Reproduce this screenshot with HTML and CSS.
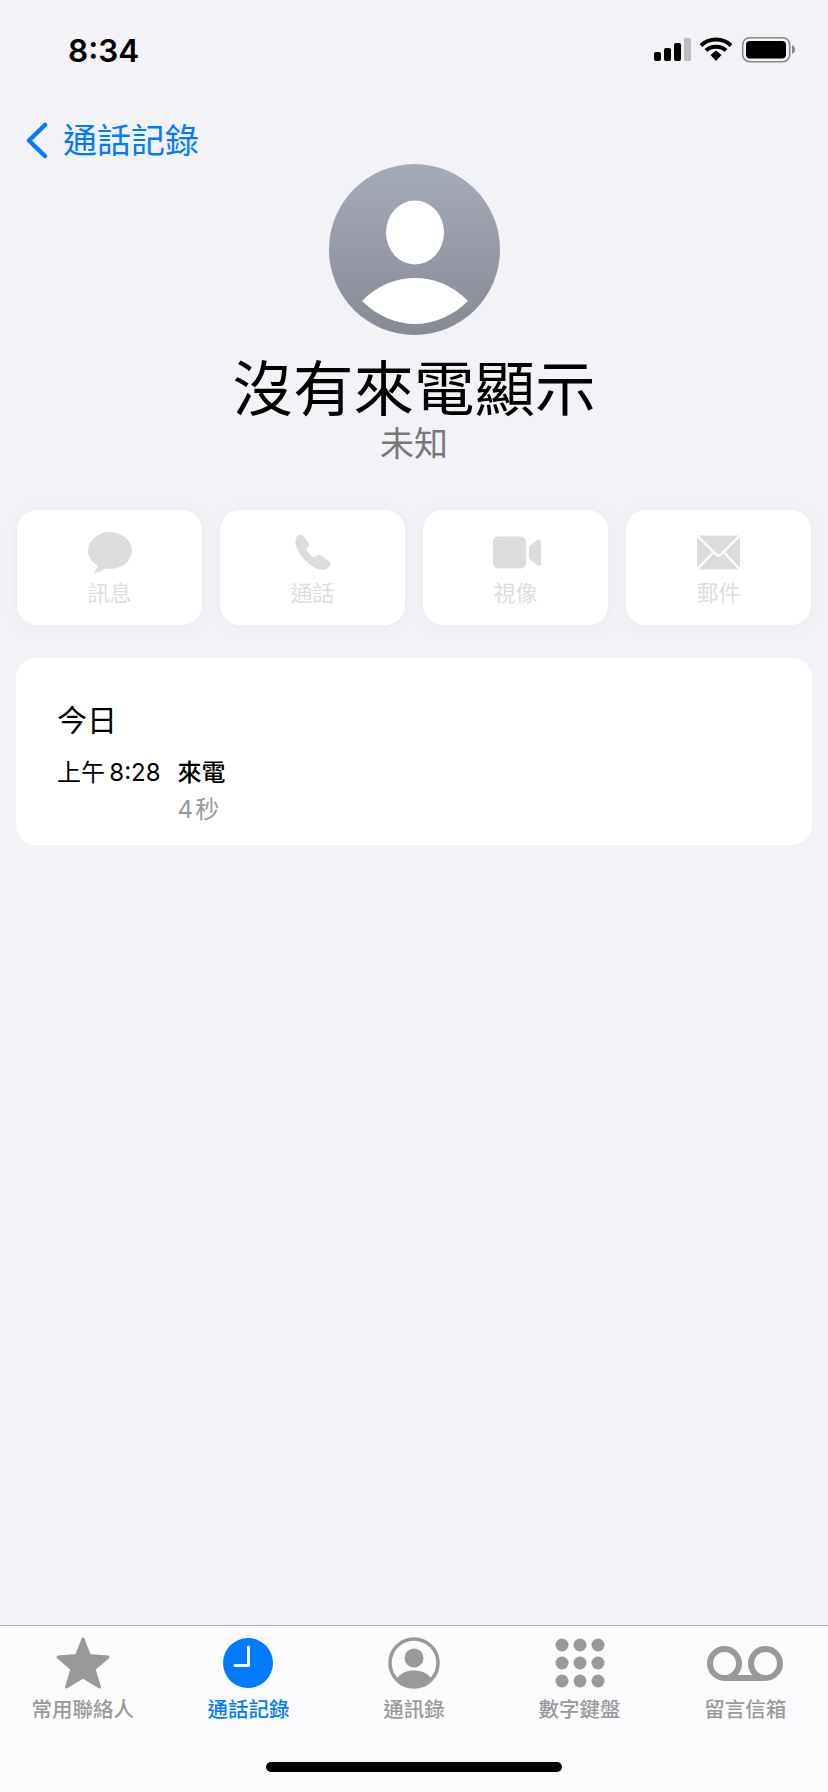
FILE: index.html
```html
<!DOCTYPE html>
<html lang="zh-Hant">
<head>
    <meta charset="UTF-8">
    <meta name="viewport" content="width=device-width, initial-scale=1.0">
    <title>通話記錄</title>
    <link rel="stylesheet" href="styles.css">
</head>
<body>
    <div class="status-bar">
        <span class="status-time">8:34</span>
        <svg class="status-icons" width="141" height="26" viewBox="0 0 141 26">
            <rect x="0" y="15" width="7" height="9" rx="2" fill="#000"/>
            <rect x="10" y="11" width="7" height="13" rx="2" fill="#000"/>
            <rect x="20" y="6" width="7" height="18" rx="2" fill="#000"/>
            <rect x="30" y="1" width="7" height="23" rx="1.5" fill="#bdbdc0"/>
            <path d="M47 8.500 C55 0.500 69 0.500 77 8.500" fill="none" stroke="#000" stroke-width="4"/>
            <path d="M52 13.500 C57 8.500 67 8.500 72 13.500" fill="none" stroke="#000" stroke-width="4"/>
            <path d="M56.500 18 L62 13.500 L67.500 18 L62 24 Z" fill="#000"/>
            <rect x="88.700" y="0.700" width="47" height="24" rx="7" fill="none" stroke="#8a8a8c" stroke-width="1.600"/>
            <rect x="92" y="4" width="40" height="17.500" rx="4" fill="#000"/>
            <path d="M138 8 C140 8.500 141 10.500 141 12.500 C141 14.500 140 16.500 138 17 Z" fill="#8a8a8c"/>
        </svg>
    </div>

    <a class="back-link" href="#">
        <svg width="23" height="37" viewBox="0 0 23 37">
            <path d="M20 3 L4 18.500 L20 34" fill="none" stroke="#007aff" stroke-width="4.500" stroke-linecap="round" stroke-linejoin="round"/>
        </svg>
        <span>通話記錄</span>
    </a>

    <div class="profile">
        <svg class="avatar" width="171" height="171" viewBox="0 0 171 171">
            <defs>
                <linearGradient id="avatarFill" x1="0" y1="0" x2="0" y2="1">
                    <stop offset="0" stop-color="#a6abb8"/>
                    <stop offset="1" stop-color="#858a95"/>
                </linearGradient>
            </defs>
            <circle cx="85.500" cy="85.500" r="85.500" fill="url(#avatarFill)"/>
            <ellipse cx="86" cy="68.500" rx="29" ry="32" fill="#fff"/>
            <path d="M33 137 C48 121 68 114 86 114 C104 114 124 121 139 137 C124 152 104 160 86 160 C68 160 48 152 33 137 Z" fill="#fff"/>
        </svg>
        <h1 class="profile-name">沒有來電顯示</h1>
        <p class="profile-sub">未知</p>
    </div>

    <div class="actions">
        <div class="action">
            <svg width="44" height="41" viewBox="0 0 44 41">
                <ellipse cx="22" cy="18.500" rx="22" ry="18.500" fill="#dbdddc"/>
                <path d="M10 31 C10 35 8 38 6 40 C5.500 41 6.500 41 8 40.500 C12 39.500 16 38 20 35 Z" fill="#dbdddc"/>
            </svg>
            <span>訊息</span>
        </div>
        <div class="action">
            <svg width="36" height="37" viewBox="0 0 36 37">
                <path d="M1.500 3 C3 1 6 -0.500 8 1.500 L14 9.500 C15 11 14 12.500 12 14 C11 15 11.500 16.500 13 18.500 C15 21 17.500 23 19 23 C20.500 23 21.500 21.500 23 21 C24 20.500 25 20.500 26.500 21.500 L34 27 C36 28.500 36 31 34 33 C31 36 28 36.500 24.500 35.500 C15 33 4 22 1 12 C0 8 0 5 1.500 3 Z" fill="#dbdddc"/>
            </svg>
            <span>通話</span>
        </div>
        <div class="action action-video">
            <svg width="48" height="32" viewBox="0 0 48 32">
                <rect x="0" y="0" width="33" height="32" rx="5" fill="#dbdddc"/>
                <path d="M36 10 L44 3.500 C46 2 48 3 48 5 L48 27 C48 29 46 30 44 28.500 L36 22 Z" fill="#dbdddc"/>
            </svg>
            <span>視像</span>
        </div>
        <div class="action">
            <svg width="43" height="34" viewBox="0 0 43 34">
                <rect x="0" y="0" width="43" height="34" rx="1" fill="#dbdddc"/>
                <path d="M0 0 L18.500 18.500 C20.500 20.500 22.500 20.500 24.500 18.500 L43 0" fill="none" stroke="#fff" stroke-width="2.200"/>
                <path d="M0 34 L15.500 17.500 M43 34 L27.500 17.500" fill="none" stroke="#fff" stroke-width="2.200"/>
            </svg>
            <span>郵件</span>
        </div>
    </div>

    <div class="history">
        <div class="history-date">今日</div>
        <div class="history-row">
            <span class="history-time">上午&#8201;8:28</span>
            <div class="history-info">
                <div class="history-type">來電</div>
                <div class="history-length">4&#8202;秒</div>
            </div>
        </div>
    </div>

    <nav class="tabbar">
        <div class="tabs">
            <div class="tab">
                <div class="tab-icon">
                    <svg width="54" height="52" viewBox="0 0 54 52">
                        <path d="M27 2 L33.500 18.500 L52 20 L38 32 L43.500 50 L27 40 L10.500 50 L16 32 L2 20 L20.500 18.500 Z" fill="#999" stroke="#999" stroke-width="3" stroke-linejoin="round"/>
                    </svg>
                </div>
                <span>常用聯絡人</span>
            </div>
            <div class="tab active">
                <div class="tab-icon">
                    <svg width="50" height="50" viewBox="0 0 50 50">
                        <circle cx="25" cy="25" r="25" fill="#007aff"/>
                        <path d="M25.500 9 L25.500 27.500 L12 27.500" fill="none" stroke="#fff" stroke-width="3" stroke-linecap="round" stroke-linejoin="round"/>
                    </svg>
                </div>
                <span>通話記錄</span>
            </div>
            <div class="tab">
                <div class="tab-icon">
                    <svg width="52" height="52" viewBox="0 0 52 52">
                        <circle cx="26" cy="26" r="24" fill="none" stroke="#999" stroke-width="3.500"/>
                        <circle cx="26" cy="21" r="9.500" fill="#999"/>
                        <path d="M8.500 42 C12 36 19 33.500 26 33.500 C33 33.500 40 36 43.500 42 C39 47 33 50 26 50 C19 50 13 47 8.500 42 Z" fill="#999"/>
                    </svg>
                </div>
                <span>通訊錄</span>
            </div>
            <div class="tab">
                <div class="tab-icon">
                    <svg width="50" height="50" viewBox="0 0 50 50">
                        <circle cx="7" cy="7" r="6.500" fill="#999"/>
                        <circle cx="25" cy="7" r="6.500" fill="#999"/>
                        <circle cx="43" cy="7" r="6.500" fill="#999"/>
                        <circle cx="7" cy="25" r="6.500" fill="#999"/>
                        <circle cx="25" cy="25" r="6.500" fill="#999"/>
                        <circle cx="43" cy="25" r="6.500" fill="#999"/>
                        <circle cx="7" cy="43" r="6.500" fill="#999"/>
                        <circle cx="25" cy="43" r="6.500" fill="#999"/>
                        <circle cx="43" cy="43" r="6.500" fill="#999"/>
                    </svg>
                </div>
                <span>數字鍵盤</span>
            </div>
            <div class="tab">
                <div class="tab-icon">
                    <svg width="76" height="35" viewBox="0 0 76 35">
                        <circle cx="17.500" cy="17.500" r="14.500" fill="none" stroke="#999" stroke-width="6"/>
                        <circle cx="58.500" cy="17.500" r="14.500" fill="none" stroke="#999" stroke-width="6"/>
                        <rect x="17.500" y="29" width="41" height="6" fill="#999"/>
                    </svg>
                </div>
                <span>留言信箱</span>
            </div>
        </div>
        <div class="home-indicator"></div>
    </nav>
</body>
</html>
```

FILE: styles.css
```css
* {
    box-sizing: border-box;
}

html,
body {
    margin: 0;
    padding: 0;
}

body {
    width: 828px;
    height: 1792px;
    overflow: hidden;
    display: flex;
    flex-direction: column;
    background-color: #f2f2f7;
    color: #000;
    font-family: Inter, "Noto Sans CJK TC", sans-serif;
}

svg {
    display: block;
}

.status-bar {
    height: 100px;
    flex-shrink: 0;
    display: flex;
    justify-content: space-between;
    align-items: center;
    padding: 0 33px 0 68px;
}

.status-time {
    font-size: 31.5px;
    font-weight: 600;
}

.back-link {
    height: 37px;
    margin: 22px 0 0 25px;
    align-self: flex-start;
    display: flex;
    align-items: center;
    gap: 15px;
    color: #007aff;
    font-size: 34px;
    line-height: 37px;
    text-decoration: none;
}

.profile {
    margin-top: 5px;
    display: flex;
    flex-direction: column;
    align-items: center;
}

.profile-name {
    margin: 14px 0 0;
    font-size: 60.5px;
    font-weight: 400;
    line-height: 80px;
}

.profile-sub {
    margin: -5px 0 0;
    color: #77777a;
    font-size: 34px;
    line-height: 40px;
}

.actions {
    margin: 46px 17px 0;
    display: grid;
    grid-template-columns: repeat(4, 1fr);
    gap: 18px;
}

.action {
    height: 115px;
    display: flex;
    flex-direction: column;
    align-items: center;
    background-color: #fff;
    border-radius: 20px;
    box-shadow: 0 2px 18px rgba(0, 0, 0, 0.04);
    color: #dcdddd;
    font-size: 22px;
}

.action svg {
    height: 41px;
    margin-top: 22px;
}

.action-video svg {
    margin-left: 3px;
}

.action span {
    margin-top: 5px;
    line-height: 30px;
}

.history {
    margin: 33px 16px 0;
    height: 187px;
    padding: 40px 41px 0;
    background-color: #fff;
    border-radius: 20px;
}

.history-date {
    font-size: 30px;
    line-height: 44px;
}

.history-row {
    margin-top: 13px;
    display: flex;
    gap: 17px;
    font-size: 24px;
    line-height: 36px;
}

.history-type {
    font-weight: 500;
}

.history-length {
    margin-top: 1px;
    color: #98989d;
}

.tabbar {
    height: 167px;
    margin-top: auto;
    flex-shrink: 0;
    padding-top: 11px;
    background-color: #fbfbfd;
    border-top: 1px solid #b1b1b4;
}

.tabs {
    display: grid;
    grid-template-columns: repeat(5, 1fr);
}

.tab {
    display: flex;
    flex-direction: column;
    align-items: center;
    color: #999;
    font-size: 20.5px;
    font-weight: 500;
    line-height: 28px;
}

.tab span {
    margin-top: 5px;
}

.tab svg {
    margin-top: -2px;
}

.tab.active {
    color: #007aff;
}

.tab-icon {
    height: 54px;
    display: flex;
    align-items: center;
    justify-content: center;
}

.home-indicator {
    width: 296px;
    height: 10px;
    margin: 38px auto 0;
    background-color: #000;
    border-radius: 5px;
}
```
